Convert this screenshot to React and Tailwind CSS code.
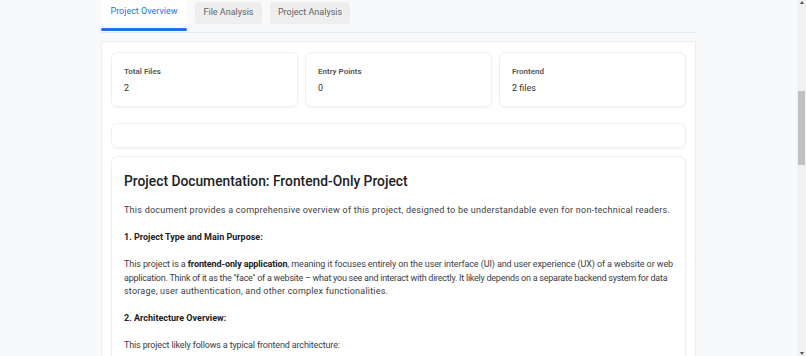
import React from "react";

const stats = [
  { label: "Total Files", value: "2" },
  { label: "Entry Points", value: "0" },
  { label: "Frontend", value: "2 files" },
];

const Tabs = () => {
  return (
    <div className="flex gap-[8px] h-[33px] border-b border-[#e8eaed]">
      <div className="flex flex-col w-[86px]">
        <div className="h-[24px] bg-white flex items-center justify-center text-[9px] text-[#1a73e8]">
          Project Overview
        </div>
        <div className="mt-[4px] h-[3px] bg-[#1a73e8] rounded-full" />
      </div>
      <div className="mt-[2px] h-[22px] w-[67px] bg-[#eeeeee] rounded-[3px] flex items-center justify-center text-[9px] text-[#5f6368]">
        File Analysis
      </div>
      <div className="mt-[2px] h-[22px] w-[80px] bg-[#eeeeee] rounded-[3px] flex items-center justify-center text-[9px] text-[#5f6368]">
        Project Analysis
      </div>
    </div>
  );
};

const StatCard = ({ label, value }) => {
  return (
    <div className="h-[55px] rounded-[6px] border border-[#f1f1f1] shadow-[0_1px_2px_rgba(0,0,0,0.05)] px-[12px] pt-[12px]">
      <div className="text-[8px] font-semibold text-[#555] leading-[14px]">{label}</div>
      <div className="mt-[2px] text-[9px] text-[#333] leading-[14px]">{value}</div>
    </div>
  );
};

const Scrollbar = () => {
  return (
    <div className="w-[9px] h-full bg-[#f1f1f1] flex flex-col items-center">
      <div className="mt-[1px] w-0 h-0 border-l-[2px] border-r-[2px] border-b-[3px] border-l-transparent border-r-transparent border-b-[#505050]" />
      <div className="mt-[87px] w-[7px] h-[74px] bg-[#c1c1c1]" />
      <div className="flex-1" />
      <div className="mb-[1px] w-0 h-0 border-l-[2px] border-r-[2px] border-t-[3px] border-l-transparent border-r-transparent border-t-[#505050]" />
    </div>
  );
};

const App = () => {
  return (
    <div
      className="w-[806px] h-[356px] overflow-hidden flex bg-[#f8f9fa]"
      style={{ fontFamily: "Roboto, 'Open Sans', sans-serif" }}
    >
      <div className="flex-1">
        <div className="w-[595px] mx-auto">
          <Tabs />
          <div className="mt-[8px] bg-white border border-[#eeeeee] px-[9px] pt-[10px] h-[400px]">
            <div className="grid grid-cols-3 gap-[7px]">
              {stats.map((s, i) => (
                <StatCard key={i} label={s.label} value={s.value} />
              ))}
            </div>
            <div className="mt-[16px] h-[25px] rounded-[6px] border border-[#f1f1f1] shadow-[0_1px_2px_rgba(0,0,0,0.05)]" />
            <div className="mt-[8px] rounded-[6px] border border-[#f1f1f1] shadow-[0_1px_2px_rgba(0,0,0,0.05)] px-[12px] pt-[14px] pb-[20px]">
              <h1 className="text-[13.8px] font-medium text-[#202124] leading-[20px]">
                Project Documentation: Frontend-Only Project
              </h1>
              <div className="mt-[13px] text-[9px] leading-[13.5px] text-[#3c4043] flex flex-col gap-[13.5px] whitespace-nowrap">
                <p className="tracking-[0.25px]">
                  This document provides a comprehensive overview of this project, designed to be understandable even for non-technical readers.
                </p>
                <p className="font-bold text-[#202124]">1. Project Type and Main Purpose:</p>
                <p>
                  <span className="tracking-[-0.1px]">
                    This project is a <strong className="text-[#202124]">frontend-only application</strong>, meaning it focuses entirely on the user interface (UI) and user experience (UX) of a website or web
                  </span>
                  <br />
                  <span className="tracking-[-0.25px]">
                    application. Think of it as the "face" of a website – what you see and interact with directly. It likely depends on a separate backend system for data
                  </span>
                  <br />
                  <span className="tracking-[0.2px]">storage, user authentication, and other complex functionalities.</span>
                </p>
                <p className="font-bold text-[#202124]">2. Architecture Overview:</p>
                <p className="tracking-[-0.15px]">This project likely follows a typical frontend architecture:</p>
              </div>
            </div>
          </div>
        </div>
      </div>
      <Scrollbar />
    </div>
  );
};

export default App;
